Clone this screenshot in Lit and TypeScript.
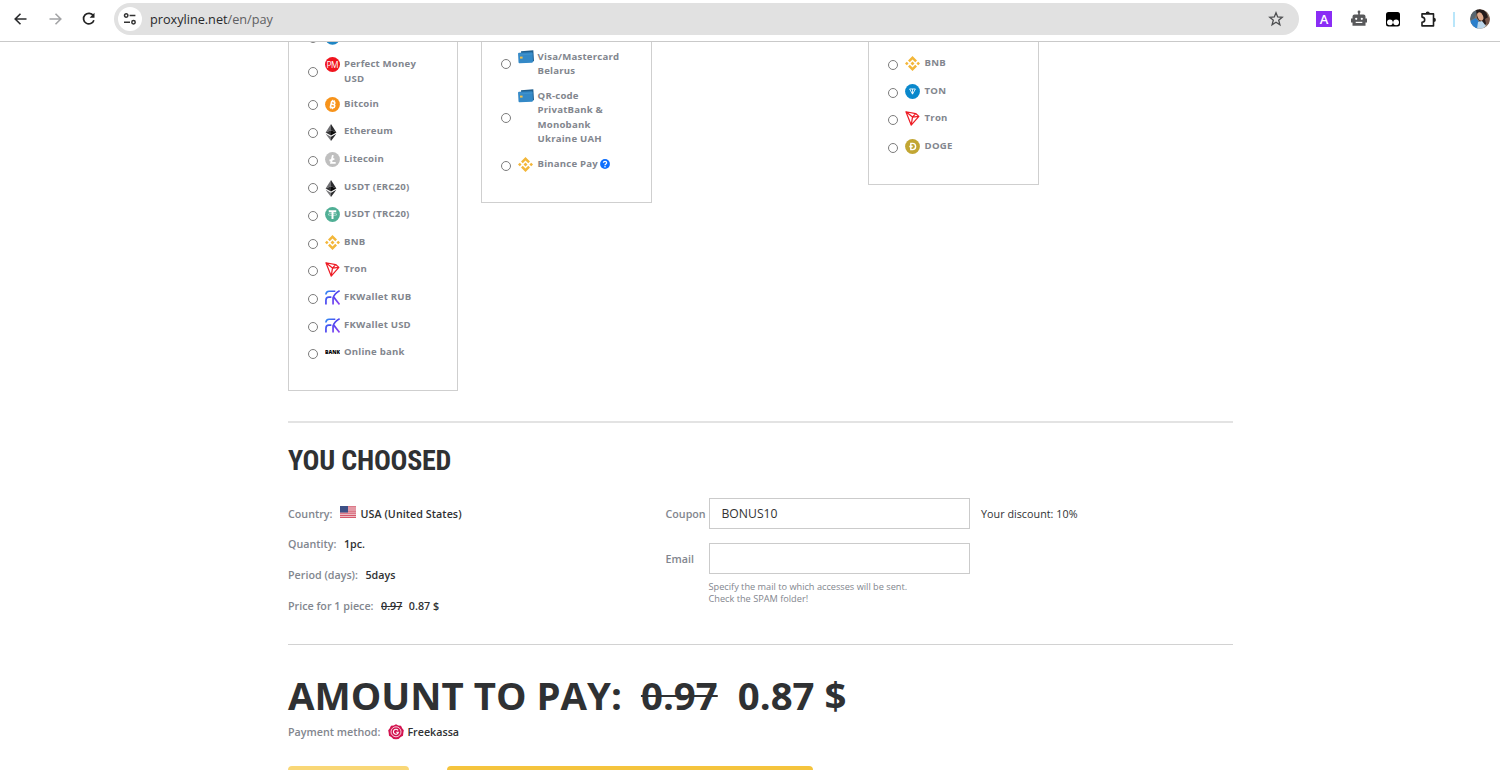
import { LitElement, html, css, svg, nothing } from "lit";
import { customElement, property } from "lit/decorators.js";

type Option = { icon: string; lines: string[]; help?: boolean };

const wrap = (body: unknown, w = 15, h = 15, box = "0 0 16 16") =>
  html`<svg width=${w} height=${h} viewBox=${box}>${body}</svg>`;

const bnb = svg`<g fill="#f3b73a">
  <path d="M8 0 12.800 4.800 10.900 6.700 8 3.800 5.100 6.700 3.200 4.800z"/>
  <path d="M8 16 12.800 11.200 10.900 9.300 8 12.200 5.100 9.300 3.200 11.200z"/>
  <path d="M0 8 1.900 6.100 3.800 8 1.900 9.900z"/><path d="M12.200 8 14.100 6.100 16 8 14.100 9.900z"/>
  <path d="M5.900 8 8 5.900 10.100 8 8 10.100z"/></g>`;
const eth = svg`<path d="M6 0 .6 8.400 6 6.200z" fill="#6f6f72"/><path d="M6 0 11.400 8.400 6 6.200z" fill="#2b2b2e"/>
  <path d="M.6 8.400 6 6.200V11.500z" fill="#343436"/><path d="M11.400 8.400 6 6.200V11.500z" fill="#0c0c0c"/>
  <path d="M.6 9.700 6 12.800V17z" fill="#77777a"/><path d="M11.400 9.700 6 12.800V17z" fill="#2c2c2e"/>`;
const fk = svg`<defs><linearGradient id="fk" gradientUnits="userSpaceOnUse" x1="0" y1="0" x2="16" y2="16"><stop offset="0" stop-color="#2f9cf5"/><stop offset=".45" stop-color="#4a45f0"/><stop offset="1" stop-color="#9440f0"/></linearGradient></defs>
  <g fill="none" stroke="url(#fk)" stroke-width="1.800"><path d="M.9 4.800C1.200 2.300 2.200 1.300 4.200 1.300H11"/><path d="M1 15.400V11C1 8.700 2 7.500 4 7.500H6.800"/><path d="M15.600.8C12.800 2.200 9.800 5 8.600 8.200V15.400"/><path d="M9.300 7.600 15.500 15.400"/></g>`;

const icons: Record<string, () => unknown> = {
  blue: () => wrap(svg`<circle cx="8" cy="8" r="7.800" fill="#1f86c4"/>`),
  pm: () => wrap(svg`<circle cx="8" cy="8" r="8" fill="#f0141e"/><text x="7.800" y="11.300" text-anchor="middle" font-family="Open Sans" font-weight="400" font-size="9" letter-spacing="-.5" fill="#fff">PM</text>`),
  btc: () => wrap(svg`<circle cx="8" cy="8" r="7.900" fill="#f7931a"/><g transform="rotate(13 8 8)" fill="none" stroke="#fff"><path stroke-width="1.700" d="M6.200 4.700H8.600a1.500 1.500 0 0 1 0 3.100H6.400M6.400 7.800H9a1.700 1.700 0 0 1 0 3.400H5.600M6.400 4.700V11.200"/><path d="M7.200 3V4.600M8.900 3V4.600M7.200 11.200V13M8.900 11.200V13"/></g>`),
  eth: () => wrap(eth, 12, 17, "0 0 12 17"),
  ltc: () => wrap(svg`<circle cx="8" cy="8" r="7.900" fill="#bfbfbf"/><path d="M8.400 3.300 6.500 11.600H11.400M4.800 9.200 10 7.200" fill="none" stroke="#fff" stroke-width="1.900"/>`),
  usdt: () => wrap(svg`<circle cx="8" cy="8" r="7.900" fill="#50af95"/><path d="M4 4.600H12M8 4.600V12.800" fill="none" stroke="#fff" stroke-width="2.100"/><ellipse cx="8" cy="8" rx="4.800" ry="1.100" fill="none" stroke="#fff" stroke-width=".5"/>`),
  bnb: () => wrap(bnb),
  tron: () => wrap(svg`<path d="M1 .8 11.400 2.700 14.800 5.700 6.600 15zM1 .8 8 6.500 6.600 15M8 6.500 11.400 2.700M8 6.500 14.800 5.700" fill="none" stroke="#ee1c25" stroke-width="1.300" stroke-linejoin="round"/>`),
  fk: () => wrap(fk),
  bank: () => wrap(svg`<text x="0" y="10" textLength="16" lengthAdjust="spacingAndGlyphs" font-family="Open Sans" font-weight="800" font-size="5.800" fill="#000">BANK</text>`),
  card: () => wrap(svg`<path d="M3 1.300 15.300.3 16 11.200 4 12.400z" fill="#1f5f8f"/><rect x=".3" y="2.500" width="14.500" height="10.500" rx="1" fill="#3489c7" transform="rotate(-3 7 8)"/><path d="M.5 5.600 14.500 4.500V3.400L.4 4.500z" fill="#4293cc"/><rect x="2" y="6.600" width="2.600" height="2" fill="#f2c14a"/>`, 16, 14, "0 0 16 14"),
  ton: () => wrap(svg`<circle cx="8" cy="8" r="7.900" fill="#0a88cc"/><path d="M4.900 5.300H11.100L8 10.800zM8 5.300V10.800" fill="none" stroke="#fff" stroke-width=".9"/>`),
  doge: () => wrap(svg`<circle cx="8" cy="8" r="7.900" fill="#c2a633"/><path d="M6.200 4.700H8a3.200 3.200 0 0 1 0 6.600H6.200zM4.600 8H8.200" fill="none" stroke="#fff" stroke-width="1.500"/>`),
  kassa: () => wrap(svg`<path d="M8 .2 10.300 1.500 13 1.700 14.200 4.200 15.800 6.300 15.300 9 15 11.700 12.700 13 10.600 15 8 15.200 5.400 15 3.300 13 1 11.700.7 9 .2 6.300 1.800 4.200 3 1.700 5.700 1.500z" fill="#d31450"/><circle cx="8" cy="7.800" r="5" fill="none" stroke="#fff" stroke-width=".8"/><path d="M10 6.400A2.500 2.500 0 1 0 10.400 8.200H8.200" fill="none" stroke="#fff" stroke-width="1.100"/>`, 16, 16),
};

const left: Option[] = [
  { icon: "blue", lines: [] },
  { icon: "pm", lines: ["Perfect Money", "USD"] },
  { icon: "btc", lines: ["Bitcoin"] },
  { icon: "eth", lines: ["Ethereum"] },
  { icon: "ltc", lines: ["Litecoin"] },
  { icon: "eth", lines: ["USDT (ERC20)"] },
  { icon: "usdt", lines: ["USDT (TRC20)"] },
  { icon: "bnb", lines: ["BNB"] },
  { icon: "tron", lines: ["Tron"] },
  { icon: "fk", lines: ["FKWallet RUB"] },
  { icon: "fk", lines: ["FKWallet USD"] },
  { icon: "bank", lines: ["Online bank"] },
];
const middle: Option[] = [
  { icon: "card", lines: ["Visa/Mastercard", "Belarus"] },
  { icon: "card", lines: ["QR-code", "PrivatBank &", "Monobank", "Ukraine UAH"] },
  { icon: "bnb", lines: ["Binance Pay"], help: true },
];
const right: Option[] = [
  { icon: "bnb", lines: ["BNB"] },
  { icon: "ton", lines: ["TON"] },
  { icon: "tron", lines: ["Tron"] },
  { icon: "doge", lines: ["DOGE"] },
];

@customElement("browser-bar")
class BrowserBar extends LitElement {
  static styles = css`
    :host { display: flex; align-items: center; height: 42px; border-bottom: 1px solid #c9c9c9; background: #fff; box-sizing: border-box; padding: 0 10px 3px 13px; font: 12.700px "Open Sans", sans-serif; }
    svg { display: block; flex: none; }
    .nav { display: flex; gap: 20px; width: 101px; }
    .nav svg:last-child { margin-left: -1px; }
    .url { flex: none; display: flex; align-items: center; width: 1185px; height: 32px; border-radius: 16px; background: #e1e1e1; padding: 0 15px 0 4px; box-sizing: border-box; color: #5f6062; }
    .site { width: 24px; height: 24px; border-radius: 50%; background: #fff; display: grid; place-items: center; margin-right: 8px; }
    .host { color: #28292b; }
    .address { flex: 1; letter-spacing: -0.010px; }
    .tools { display: flex; align-items: center; margin-left: 17px; }
    .letter { width: 16px; height: 16px; background: #8a2df5; color: #fff; display: grid; place-items: center; font: 600 13px/16px "Open Sans", sans-serif; }
    .robot { margin-left: 18px; }
    .eyes { margin-left: 18px; }
    .puzzle { margin: -1px 0 0 19px; }
    .bar { width: 2px; height: 15px; background: #b9e6fa; margin: 0 15px 0 16px; }
  `;
  render() {
    const arrow = (color: string, flip: boolean) => html`<svg width="15" height="14" viewBox="0 0 15 14">
      <path transform=${flip ? "translate(15 0) scale(-1 1)" : ""} d="M13.500 7H2.500M7.500 1.700 2.200 7 7.500 12.300" fill="none" stroke=${color} stroke-width="1.600"/></svg>`;
    return html`
      <div class="nav">${arrow("#2b2c2e", false)}${arrow("#a3a4a6", true)}
        <svg width="14" height="14" viewBox="0 0 14 14"><path d="M11.300 3.700A5.300 5.300 0 1 0 11.900 8.200" fill="none" stroke="#222" stroke-width="1.700"/><path d="M12.500.8V5.700H7.600z" fill="#222"/></svg>
      </div>
      <div class="url">
        <span class="site"><svg width="14" height="14" viewBox="0 0 14 14"><g fill="none" stroke="#333" stroke-width="1.500"><circle cx="3.200" cy="3.500" r="1.700"/><path d="M6.600 3.500H12.400M1 10.300H7"/><circle cx="10.500" cy="10.300" r="1.700"/></g></svg></span>
        <span class="address"><span class="host">proxyline.net</span>/en/pay</span>
        <svg width="16" height="16" viewBox="0 0 16 16"><path d="M8 1.800 9.700 6 14.200 6.300 10.700 9.200 11.900 13.700 8 11.200 4.100 13.700 5.300 9.200 1.800 6.300 6.300 6z" fill="none" stroke="#4c4d4f" stroke-width="1.300"/></svg>
      </div>
      <div class="tools">
        <span class="letter">A</span>
        <svg class="robot" width="18" height="18" viewBox="0 0 18 18"><g fill="#58595b"><rect x="8.200" y="1" width="1.600" height="4"/><circle cx="9" cy="2" r="1.400"/><path d="M4.500 4.500H13.500A2 2 0 0 1 15.500 6.500V8.500H17V12.500H15.500V15.800H2.500V12.500H1V8.500H2.500V6.500A2 2 0 0 1 4.500 4.500z"/></g><g fill="#fff"><circle cx="6.200" cy="8.800" r="1.100"/><circle cx="11.800" cy="8.800" r="1.100"/><rect x="5.700" y="11.800" width="6.600" height="1.200"/></g></svg>
        <svg class="eyes" width="14" height="15" viewBox="0 0 14 15"><rect width="14" height="14.500" rx="2.500" fill="#000"/><circle cx="3.900" cy="10.300" r="2.900" fill="#fff"/><circle cx="10.100" cy="10.300" r="2.900" fill="#fff"/></svg>
        <svg class="puzzle" width="18" height="18" viewBox="0 0 18 18"><path d="M3 3.900H14.500V15.900H3V12.300C6.600 12.100 6.600 7.300 3 7.100z" fill="none" stroke="#1f1f1f" stroke-width="1.600" stroke-linejoin="round"/><path d="M6.600 3.700a2.100 2.100 0 0 1 4.200 0zM14.800 7.800a2.100 2.100 0 0 1 0 4.200z" fill="#1f1f1f"/></svg>
        <span class="bar"></span>
        <svg width="20" height="20" viewBox="0 0 20 20"><defs><clipPath id="face"><circle cx="10" cy="10" r="9.800"/></clipPath></defs><g clip-path="url(#face)"><rect width="20" height="20" fill="#8d7562"/><path d="M0 0H8L5 9 0 12z" fill="#566570"/><path d="M6 0C14-1 19 4 18 13L14 17 7 9z" fill="#241b1b"/><ellipse cx="10.300" cy="7.500" rx="2.700" ry="4.300" transform="rotate(-25 10.300 7.500)" fill="#dfaa8c"/><path d="M0 12 6 9 10 14 8 20H0z" fill="#2b7fcb"/><path d="M8 13 12 12 16 17 12 20H7z" fill="#bcd7ec"/><path d="M15 10 20 7V17L16 15z" fill="#765448"/></g></svg>
      </div>`;
  }
}

@customElement("method-box")
class MethodBox extends LitElement {
  @property({ attribute: false }) options: Option[] = [];
  static styles = css`
    :host { display: block; padding: 0 0 27.800px 19px; }
    .list { display: flex; flex-direction: column; gap: 10.550px; }
    .row { display: grid; grid-template-columns: 17px 19px 1fr; min-height: 17.100px; }
    .radio { appearance: none; margin: 0.600px 0 0; width: 10px; height: 10px; border: 1px solid #7c7c7c; border-radius: 50%; align-self: center; background: #fff; }
    .label { font: 700 9.600px/14.400px "Open Sans", sans-serif; letter-spacing: 0.200px; color: #82868e; white-space: nowrap; padding-left: var(--label-shift, 0); }
    .line { display: flex; align-items: center; gap: 2.500px; }
    svg { display: block; }
  `;
  render() {
    return html`<div class="list">${this.options.map((o) => html`
      <label class="row">
        <input class="radio" type="radio" name="method" />
        <span>${icons[o.icon]()}</span>
        <span class="label">${o.lines.map((l) => html`<span class="line">${l}${o.help
          ? html`<svg width="10" height="10" viewBox="0 0 10 10"><circle cx="5" cy="5" r="4.900" fill="#0d6efd"/><path d="M3.400 3.800C3.500 1.900 6.700 1.900 6.600 3.900 6.600 4.900 5 5 5 6.200" fill="none" stroke="#fff" stroke-width="1.300"/><circle cx="5" cy="7.700" r=".8" fill="#fff"/></svg>`
          : nothing}</span>`)}</span>
      </label>`)}</div>`;
  }
}

@customElement("app-root")
class AppRoot extends LitElement {
  static styles = css`
    :host { display: flex; flex-direction: column; height: 770px; overflow: hidden; background: #fff; color: #2f3133; font: 600 10.720px/16px "Open Sans", sans-serif; }
    browser-bar { flex: none; }
    .page { flex: 1; min-height: 0; overflow: hidden; padding-left: 288px; width: 945px; }
    .methods { display: flex; align-items: flex-start; height: 379px; }
    .box { box-sizing: border-box; width: 171px; border: 1px solid #cfcfcf; border-top: 0; }
    .first { width: 170px; margin: -12.400px 23px 0 0; }
    .first method-box { padding-bottom: 27.600px; }
    .second { margin-right: 216px; padding-top: 7.500px; }
    .second method-box { padding-bottom: 28.200px; }
    .third { padding-top: 14.200px; }
    .second method-box, .third method-box { --label-shift: 0.600px; }
    .rule { height: 2px; background: #e3e3e3; }
    .thin { height: 1px; background: #d2d2d2; }
    h2 { margin: 0; padding-top: 18.500px; height: 56.500px; font: 700 28px/38px "Roboto Condensed", Roboto, sans-serif; letter-spacing: -0.230px; color: #2f3133; }
    .summary { display: grid; grid-template-columns: 377.500px 1fr; height: 146px; }
    .facts { display: flex; flex-direction: column; gap: 14.750px; padding-top: 7.700px; }
    .fact { display: flex; align-items: center; height: 16px; gap: 7.500px; }
    .name { color: #82868e; }
    .fact svg { display: block; margin-top: -3px; }
    .country { margin-left: -3px; letter-spacing: 0.050px; }
    .was { text-decoration: line-through; margin-right: -1px; }
    .form { display: grid; grid-template-columns: 43px 261px auto; align-content: start; justify-content: start; }
    .caption { color: #82868e; line-height: 32px; height: 31px; }
    .field { box-sizing: border-box; width: 261px; height: 31px; border: 1px solid #cbcbcb; padding: 0 12px; margin: 0; outline: 0; font: 400 12.200px/29px "Open Sans", sans-serif; color: #333; background: #fff; }
    .discount { padding-left: 11.500px; font-weight: 400; letter-spacing: 0.040px; line-height: 32px; height: 31px; }
    .email { margin-top: 14px; }
    .hint { grid-column: 2; margin-top: 7px; font: 400 9.200px/12.300px "Open Sans", sans-serif; color: #82868e; }
    .amount { display: flex; padding-top: 24px; font: 700 38.400px/53px "Open Sans", sans-serif; }
    .old { margin: 0 20px 0 19px; text-decoration: line-through; text-decoration-thickness: 2px; }
    .method { display: flex; align-items: center; height: 18px; margin-top: 1px; }
    .method svg { display: block; margin: -1px 3.500px 0 7.500px; }
    .buttons { display: flex; gap: 38px; margin-top: 24.500px; }
    .back { width: 121px; height: 40px; border-radius: 4px; background: #f9d776; }
    .pay { width: 366px; height: 40px; border-radius: 4px; background: #f5c43d; }
  `;
  render() {
    return html`
      <browser-bar></browser-bar>
      <div class="page">
        <div class="methods">
          <div class="box first"><method-box .options=${left}></method-box></div>
          <div class="box second"><method-box .options=${middle}></method-box></div>
          <div class="box third"><method-box .options=${right}></method-box></div>
        </div>
        <div class="rule"></div>
        <h2>YOU CHOOSED</h2>
        <div class="summary">
          <div class="facts">
            <div class="fact"><span class="name">Country:</span>
              <svg width="16" height="12" viewBox="0 0 16 12"><rect width="16" height="12" fill="#f3dce0"/><path d="M0 .8H16M0 3H16M0 5.200H16M0 7.200H16M0 9.300H16M0 11.300H16" stroke="#d5596c" stroke-width="1.200"/><rect width="8" height="6.500" fill="#3d5086"/></svg>
              <span class="country">USA (United States)</span></div>
            <div class="fact"><span class="name">Quantity:</span><span>1pc.</span></div>
            <div class="fact"><span class="name">Period (days):</span><span>5days</span></div>
            <div class="fact"><span class="name">Price for 1 piece:</span><span class="was">0.97</span><span>0.87 $</span></div>
          </div>
          <div class="form">
            <span class="caption">Coupon</span><input class="field" .value=${"BONUS10"} /><span class="discount">Your discount: 10%</span>
            <span class="caption email">Email</span><input class="field email" />
            <div class="hint">Specify the mail to which accesses will be sent.<br />Check the SPAM folder!</div>
          </div>
        </div>
        <div class="thin"></div>
        <div class="amount"><span>AMOUNT TO PAY:</span><span class="old">0.97</span><span>0.87 $</span></div>
        <div class="method"><span class="name">Payment method:</span>${icons.kassa()}<span>Freekassa</span></div>
        <div class="buttons"><div class="back"></div><div class="pay"></div></div>
      </div>`;
  }
}
